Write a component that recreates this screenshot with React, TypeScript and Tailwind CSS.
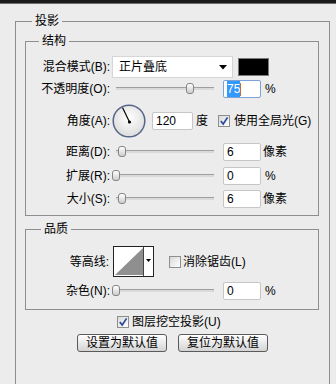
import React from "react";

const font = "font-['Liberation_Sans','Noto_Sans_CJK_SC',sans-serif]";

function Slider({ thumb }: { thumb: string }) {
  return (
    <div className="relative w-[102px] h-[12px]">
      <div className="absolute left-[4px] right-0 top-[4px] h-[3px] border-t border-[#9e9e9e] bg-[#dadada]" />
      <div className={`absolute top-0 w-[8px] h-[11px] rounded-[3px] border border-[#858585] bg-gradient-to-b from-white to-[#cdcdcd] ${thumb}`} />
    </div>
  );
}

function NumInput({ children, focused = false, w = "w-[38px]" }: { children: React.ReactNode; focused?: boolean; w?: string }) {
  return (
    <div
      className={`${w} h-[18px] bg-white border rounded-[2px] px-[3px] flex items-center ${
        focused ? "border-[#7ca3d6]" : "border-[#c6c6c6]"
      }`}
    >
      {children}
    </div>
  );
}

function Check({ checked }: { checked?: boolean }) {
  return (
    <div className="w-[12px] h-[12px] border border-[#8e8e8e] bg-gradient-to-br from-[#d9d9d9] to-white flex items-center justify-center">
      {checked && (
        <svg width="10" height="10" viewBox="0 0 10 10">
          <path d="M1.8 5 L4.2 8 L8.6 1.4" fill="none" stroke="#2b4a9c" strokeWidth="1.7" />
        </svg>
      )}
    </div>
  );
}

function Dial() {
  return (
    <svg width="34" height="34" viewBox="0 0 34 34">
      <defs>
        <radialGradient id="dialg" cx="50%" cy="40%" r="60%">
          <stop offset="0%" stopColor="#ffffff" />
          <stop offset="100%" stopColor="#dcdcdc" />
        </radialGradient>
      </defs>
      <circle cx="17" cy="17" r="15.8" fill="url(#dialg)" stroke="#56668a" strokeWidth="1.5" />
      <line x1="17.5" y1="18" x2="10.5" y2="3.5" stroke="#000" strokeWidth="1.2" />
      <circle cx="17.5" cy="18" r="1.6" fill="#000" />
    </svg>
  );
}

function Contour() {
  return (
    <svg width="41" height="31" viewBox="0 0 41 31">
      <rect x="0.5" y="0.5" width="40" height="30" fill="#fff" stroke="#222" />
      <polygon points="2,29 30,2 30,29" fill="#8f8f8f" />
      <line x1="30.5" y1="1" x2="30.5" y2="30" stroke="#444" />
      <polygon points="33,13 38,13 35.5,16" fill="#000" />
    </svg>
  );
}

export default function App() {
  return (
    <div className={`w-[336px] h-[384px] overflow-hidden bg-[#ececec] text-[12px] leading-[16px] text-black ${font}`}>
      <div className="h-[4px] bg-[#1b1b1b] border-b border-[#6e6e6e]" />
      <div className="pt-[9px]">
        <fieldset className="ml-[15px] w-[315px] h-[420px] border border-[#8e8e8e]">
          <legend className="ml-[16px] px-[3px]">投影</legend>

          <fieldset className="ml-[9px] mt-[4px] w-[294px] border border-[#8e8e8e] pt-[7px] pb-[7px]">
            <legend className="ml-[13px] px-[3px]">结构</legend>

            <div className="flex items-center h-[22px]">
              <div className="w-[84px] text-right">混合模式(B):</div>
              <div className="ml-[2px] w-[121px] h-[22px] bg-white border border-[#d6d6d6] flex items-center justify-between pl-[6px] pr-[5px]">
                <span>正片叠底</span>
                <svg width="8" height="5" viewBox="0 0 8 5">
                  <polygon points="0,0 8,0 4,4.5" fill="#000" />
                </svg>
              </div>
              <div className="ml-[5px] w-[31px] h-[18px] bg-black border border-[#7a7a7a]" />
            </div>

            <div className="flex items-center h-[18px] mt-[2px]">
              <div className="w-[84px] text-right">不透明度(O):</div>
              <div className="ml-[2px]">
                <Slider thumb="left-[74px]" />
              </div>
              <div className="ml-[9px]">
                <NumInput focused>
                  <span className="bg-[#3399ff] text-white">75</span>
                  <span className="w-px h-[13px] bg-[#d06a2a]" />
                </NumInput>
              </div>
              <span className="ml-[4px]">%</span>
            </div>

            <div className="flex items-center h-[34px] mt-[6px]">
              <div className="w-[84px] text-right">角度(A):</div>
              <div className="ml-[2px] flex">
                <Dial />
              </div>
              <div className="ml-[6px]">
                <NumInput w="w-[41px]">120</NumInput>
              </div>
              <span className="ml-[3px]">度</span>
              <div className="ml-[10px]">
                <Check checked />
              </div>
              <span className="ml-[4px]">使用全局光(G)</span>
            </div>

            <div className="flex items-center h-[18px] mt-[5px]">
              <div className="w-[84px] text-right">距离(D):</div>
              <div className="ml-[2px]">
                <Slider thumb="left-[6px]" />
              </div>
              <div className="ml-[9px]">
                <NumInput>6</NumInput>
              </div>
              <span className="ml-[2px]">像素</span>
            </div>

            <div className="flex items-center h-[18px] mt-[6px]">
              <div className="w-[84px] text-right">扩展(R):</div>
              <div className="ml-[2px]">
                <Slider thumb="left-0" />
              </div>
              <div className="ml-[9px]">
                <NumInput>0</NumInput>
              </div>
              <span className="ml-[4px]">%</span>
            </div>

            <div className="flex items-center h-[18px] mt-[5px]">
              <div className="w-[84px] text-right">大小(S):</div>
              <div className="ml-[2px]">
                <Slider thumb="left-[6px]" />
              </div>
              <div className="ml-[9px]">
                <NumInput>6</NumInput>
              </div>
              <span className="ml-[2px]">像素</span>
            </div>
          </fieldset>

          <fieldset className="ml-[9px] mt-[5px] w-[294px] border border-[#8e8e8e] pt-[9px] pb-[9px]">
            <legend className="ml-[15px] px-[3px]">品质</legend>

            <div className="flex items-center h-[31px]">
              <div className="w-[83px] text-right">等高线:</div>
              <div className="ml-[4px] flex">
                <Contour />
              </div>
              <div className="ml-[15px]">
                <Check />
              </div>
              <span className="ml-[2px]">消除锯齿(L)</span>
            </div>

            <div className="flex items-center h-[18px] mt-[5px]">
              <div className="w-[84px] text-right">杂色(N):</div>
              <div className="ml-[2px]">
                <Slider thumb="left-0" />
              </div>
              <div className="ml-[9px]">
                <NumInput>0</NumInput>
              </div>
              <span className="ml-[4px]">%</span>
            </div>
          </fieldset>

          <div className="flex items-center h-[16px] mt-[4px] ml-[101px]">
            <Check checked />
            <span className="ml-[3px]">图层挖空投影(U)</span>
          </div>

          <div className="flex mt-[4px] ml-[61px] gap-[11px]">
            <button className="w-[90px] h-[18px] rounded-[3px] border border-[#5a5a5a] bg-gradient-to-b from-white to-[#d4d4d4] flex items-center justify-center leading-none">
              设置为默认值
            </button>
            <button className="w-[90px] h-[18px] rounded-[3px] border border-[#5a5a5a] bg-gradient-to-b from-white to-[#d4d4d4] flex items-center justify-center leading-none">
              复位为默认值
            </button>
          </div>
        </fieldset>
      </div>
    </div>
  );
}
